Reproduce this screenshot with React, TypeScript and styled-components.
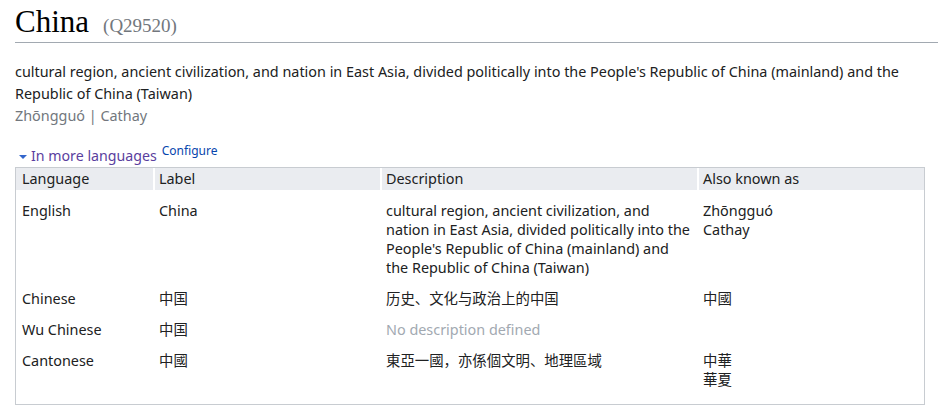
import React from "react";
import styled, { createGlobalStyle } from "styled-components";

const GlobalStyle = createGlobalStyle`
  html, body { margin: 0; padding: 0; background: #ffffff; }
  body {
    font-family: "Noto Sans", "Noto Sans CJK SC", sans-serif;
    font-size: 14.4px;
    color: #202122;
  }
`;

const Page = styled.div`
  padding-left: 15px;
`;

const Heading = styled.h1`
  margin: 0;
  padding: 5px 0 3px;
  font-family: "Liberation Serif", "Noto Sans CJK SC", serif;
  font-weight: normal;
  font-size: 31px;
  line-height: 34px;
  height: 34px;
  color: #000;
  border-bottom: 1px solid #a2a9b1;
`;

const EntityId = styled.span`
  margin-left: 14px;
  font-size: 19px;
  line-height: 1;
  color: #72777d;
`;

const Content = styled.div`
  padding-right: 13px;
`;

const Description = styled.div`
  margin-top: 18px;
  line-height: 22px;
`;

const Aliases = styled.div`
  line-height: 21px;
  color: #72777d;
`;

const Toggle = styled.div`
  margin-top: 20px;
  display: flex;
  align-items: center;
  line-height: 20px;
  height: 20px;
  margin-bottom: 1px;
`;

const Caret = styled.span`
  display: inline-block;
  width: 0;
  height: 0;
  margin: 1px 4px 0 4px;
  border-left: 4px solid transparent;
  border-right: 4px solid transparent;
  border-top: 4px solid #3366cc;
`;

const ToggleLink = styled.a`
  color: #5a3e9e;
  font-size: 14.2px;
  text-decoration: none;
`;

const ConfigureLink = styled.a`
  color: #0645ad;
  font-size: 12px;
  margin-left: 5px;
  align-self: flex-start;
  line-height: 12px;
  margin-top: -1px;
  text-decoration: none;
`;

const Table = styled.table`
  width: 910px;
  border: 1px solid #c8ccd1;
  border-collapse: separate;
  border-spacing: 0;
  table-layout: fixed;
`;

const Col = styled.col<{ $w: number }>`
  width: ${(p) => p.$w}px;
`;

const HeadCell = styled.th<{ $first?: boolean }>`
  background: #eaecf0;
  font-weight: normal;
  text-align: left;
  line-height: 22px;
  padding: 0 4px 0 ${(p) => (p.$first ? 6 : 4)}px;
  border-left: ${(p) => (p.$first ? "none" : "2px solid #ffffff")};
  color: #202122;
`;

const Cell = styled.td<{ $top: number; $bottom: number }>`
  vertical-align: top;
  line-height: 19px;
  padding: ${(p) => p.$top}px 4px ${(p) => p.$bottom}px 6px;
  color: #202122;
`;

const Empty = styled.span`
  color: #a2a9b1;
`;

const AliasLine = styled.div``;

type Row = {
  language: string;
  label: string;
  description: string | null;
  aliases: string[];
};

const rows: Row[] = [
  {
    language: "English",
    label: "China",
    description:
      "cultural region, ancient civilization, and nation in East Asia, divided politically into the People's Republic of China (mainland) and the Republic of China (Taiwan)",
    aliases: ["Zhōngguó", "Cathay"],
  },
  {
    language: "Chinese",
    label: "中国",
    description: "历史、文化与政治上的中国",
    aliases: ["中國"],
  },
  {
    language: "Wu Chinese",
    label: "中国",
    description: null,
    aliases: [],
  },
  {
    language: "Cantonese",
    label: "中國",
    description: "東亞一國，亦係個文明、地理區域",
    aliases: ["中華", "華夏"],
  },
];

export default function App() {
  return (
    <Page>
      <GlobalStyle />
      <Heading>
        China<EntityId>(Q29520)</EntityId>
      </Heading>
      <Content>
        <Description>
          cultural region, ancient civilization, and nation in East Asia,
          divided politically into the People's Republic of China (mainland)
          and the Republic of China (Taiwan)
        </Description>
        <Aliases>Zhōngguó | Cathay</Aliases>
        <Toggle>
          <Caret />
          <ToggleLink href="#">In more languages</ToggleLink>
          <ConfigureLink href="#">Configure</ConfigureLink>
        </Toggle>
        <Table>
          <colgroup>
            <Col $w={137} />
            <Col $w={227} />
            <Col $w={317} />
            <Col $w={227} />
          </colgroup>
          <thead>
            <tr>
              <HeadCell $first>Language</HeadCell>
              <HeadCell>Label</HeadCell>
              <HeadCell>Description</HeadCell>
              <HeadCell>Also known as</HeadCell>
            </tr>
          </thead>
          <tbody>
            {rows.map((r, i) => {
              const top = i === 0 ? 11 : 6;
              const bottom = i === rows.length - 1 ? 15 : 6;
              return (
                <tr key={r.language}>
                  <Cell $top={top} $bottom={bottom}>
                    {r.language}
                  </Cell>
                  <Cell $top={top} $bottom={bottom}>
                    {r.label}
                  </Cell>
                  <Cell $top={top} $bottom={bottom}>
                    {r.description ?? <Empty>No description defined</Empty>}
                  </Cell>
                  <Cell $top={top} $bottom={bottom}>
                    {r.aliases.map((a) => (
                      <AliasLine key={a}>{a}</AliasLine>
                    ))}
                  </Cell>
                </tr>
              );
            })}
          </tbody>
        </Table>
      </Content>
    </Page>
  );
}
